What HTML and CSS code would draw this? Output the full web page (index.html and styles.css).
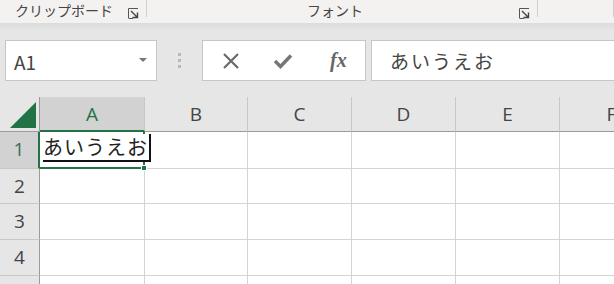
FILE: index.html
```html
<!DOCTYPE html>
<html lang="ja">

<head>
  <meta charset="UTF-8">
  <title>Excel 入力中</title>
  <link rel="stylesheet" href="styles.css">
</head>

<body>
  <!-- リボン下端のグループ名 -->
  <div class="ribbon">
    <div class="group group-clip">
      <span class="group-name">クリップボード</span>
      <svg class="launcher" width="11" height="11" viewBox="0 0 11 11">
        <path d="M0.5 10 V0.5 H10" fill="none" stroke="#555" stroke-width="1"/>
        <path d="M0.5 10.5 H5" fill="none" stroke="#555" stroke-width="1"/>
        <path d="M3 3 L9.5 9.5 M9.5 4.5 V9.5 H4.5" fill="none" stroke="#444" stroke-width="1.4"/>
      </svg>
    </div>
    <div class="group group-font">
      <span class="group-name">フォント</span>
      <svg class="launcher" width="11" height="11" viewBox="0 0 11 11">
        <path d="M0.5 10 V0.5 H10" fill="none" stroke="#555" stroke-width="1"/>
        <path d="M0.5 10.5 H5" fill="none" stroke="#555" stroke-width="1"/>
        <path d="M3 3 L9.5 9.5 M9.5 4.5 V9.5 H4.5" fill="none" stroke="#444" stroke-width="1.4"/>
      </svg>
    </div>
    <div class="group"></div>
  </div>

  <!-- 名前ボックスと数式バー -->
  <div class="formula-row">
    <div class="name-box">
      <span class="name-text">A1</span>
      <span class="drop"></span>
    </div>
    <div class="grip">
      <span></span><span></span><span></span>
    </div>
    <div class="buttons">
      <svg width="18" height="18" viewBox="0 0 18 18">
        <path d="M2 2 L16 16 M16 2 L2 16" stroke="#6a6a6a" stroke-width="2.2"/>
      </svg>
      <svg width="20" height="18" viewBox="0 0 20 18">
        <path d="M2 9 L7.5 14.5 L18 3.5" fill="none" stroke="#767676" stroke-width="3.4"/>
      </svg>
      <span class="fx">fx</span>
    </div>
    <div class="formula-input">あいうえお</div>
  </div>

  <!-- シート -->
  <div class="sheet">
    <div class="corner">
      <svg width="28" height="28" viewBox="0 0 28 28">
        <path d="M27 1 V27 H1 Z" fill="#217346"/>
      </svg>
    </div>
    <div class="col-head col-on">A</div>
    <div class="col-head">B</div>
    <div class="col-head">C</div>
    <div class="col-head">D</div>
    <div class="col-head">E</div>
    <div class="col-head">F</div>

    <div class="row-head row-on">1</div>
    <div class="cell cell-active">
      <span class="typing">あいうえお</span>
      <span class="fill-handle"></span>
    </div>
    <div class="cell"></div>
    <div class="cell"></div>
    <div class="cell"></div>
    <div class="cell"></div>
    <div class="cell"></div>

    <div class="row-head">2</div>
    <div class="cell"></div>
    <div class="cell"></div>
    <div class="cell"></div>
    <div class="cell"></div>
    <div class="cell"></div>
    <div class="cell"></div>

    <div class="row-head">3</div>
    <div class="cell"></div>
    <div class="cell"></div>
    <div class="cell"></div>
    <div class="cell"></div>
    <div class="cell"></div>
    <div class="cell"></div>

    <div class="row-head">4</div>
    <div class="cell"></div>
    <div class="cell"></div>
    <div class="cell"></div>
    <div class="cell"></div>
    <div class="cell"></div>
    <div class="cell"></div>

    <!-- 画面下端で切れている行 -->
    <div class="row-head row-cut"></div>
    <div class="cell"></div>
    <div class="cell"></div>
    <div class="cell"></div>
    <div class="cell"></div>
    <div class="cell"></div>
    <div class="cell"></div>
  </div>
</body>

</html>
```

FILE: styles.css
```css
* {
  margin: 0;
  padding: 0;
  box-sizing: border-box;
}
body {
  width: 614px;
  height: 284px;
  overflow: hidden;
  background: #fff;
  font-family: "Noto Sans CJK JP", "Noto Sans", sans-serif;
  color: #444;
}

/* リボン */
.ribbon {
  display: flex;
  height: 23px;
  background: #f3f2f1;
}
.group {
  display: flex;
  align-items: flex-start;
  height: 17px;
  border-right: 1px solid #d2d0ce;
  flex: 1;
}
.group-clip {
  flex: 0 0 147px;
  padding-left: 15px;
}
.group-font {
  flex: 0 0 391px;
  padding-left: 160px;
}
.group-name {
  font-size: 14px;
  line-height: 17px;
  margin-top: 2px;
  color: #444;
}
.launcher {
  margin-left: auto;
  margin-right: 7px;
  margin-top: 8px;
}

/* 数式バー */
.formula-row {
  display: flex;
  height: 74px;
  padding: 17px 0 0 5px;
  background: linear-gradient(#dcdcdc, #e6e6e6 8px);
}
.name-box {
  display: flex;
  align-items: center;
  width: 152px;
  height: 41px;
  background: #fff;
  border: 1px solid #c6c6c6;
  padding: 0 9px 0 8px;
}
.name-text {
  font-size: 19px;
  color: #444;
  flex: 1;
  margin-top: 2px;
}
.drop {
  width: 0;
  height: 0;
  border-left: 4px solid transparent;
  border-right: 4px solid transparent;
  border-top: 4px solid #777;
  margin-top: -2px;
}
.grip {
  width: 45px;
  height: 41px;
  display: flex;
  flex-direction: column;
  align-items: center;
  justify-content: center;
  gap: 3px;
}
.grip span {
  width: 3px;
  height: 3px;
  background: #b9b9b9;
}
.buttons {
  display: flex;
  align-items: center;
  width: 164px;
  height: 41px;
  background: #fff;
  border: 1px solid #c6c6c6;
  padding-left: 19px;
  gap: 33px;
}
.fx {
  font-family: "Liberation Serif", serif;
  font-style: italic;
  font-weight: bold;
  font-size: 20px;
  color: #666;
  margin-left: 4px;
}
.formula-input {
  flex: 1;
  height: 41px;
  margin-left: 5px;
  background: #fff;
  border: 1px solid #c6c6c6;
  border-right: 0;
  padding-left: 18px;
  font-size: 19px;
  line-height: 40px;
  letter-spacing: 2px;
  color: #444;
}

/* シート（F列は右端で切れる） */
.sheet {
  display: grid;
  grid-template-columns: 40px 105px 103px 104px 104px 104px 104px;
  grid-template-rows: 35px 37px 35px 36px 36px 8px;
  width: 614px;
  overflow: hidden;
}
.corner {
  background: #e6e6e6;
  border-right: 1px solid #9b9b9b;
  border-bottom: 1px solid #9b9b9b;
  display: flex;
  align-items: flex-end;
  justify-content: flex-end;
  padding: 0 2px 2px 0;
}
.col-head {
  background: #e6e6e6;
  border-right: 1px solid #c8c8c8;
  border-bottom: 1px solid #9b9b9b;
  text-align: center;
  font-family: "Open Sans", sans-serif;
  font-size: 19px;
  line-height: 34px;
  color: #444;
}
.col-on {
  background: #d2d2d2;
  color: #217346;
  border-bottom: 2px solid #217346;
}
.row-head {
  background: #e6e6e6;
  border-right: 1px solid #9b9b9b;
  border-bottom: 1px solid #c8c8c8;
  text-align: center;
  font-family: "Open Sans", sans-serif;
  font-size: 19px;
  line-height: 35px;
  color: #444;
}
.row-on {
  background: #d2d2d2;
  color: #3f6b52;
  border-right: 2px solid #217346;
}
.cell {
  border-right: 1px solid #d4d4d4;
  border-bottom: 1px solid #d4d4d4;
}
.row-cut,
.sheet .cell:nth-last-child(-n+6) {
  border-bottom: 0;
}
.cell-active {
  position: relative;
  border: 2px solid #217346;
  border-top: 0;
  border-left: 0;
}
.typing {
  position: absolute;
  left: 3px;
  top: 2px;
  white-space: nowrap;
  font-size: 20px;
  line-height: 26px;
  letter-spacing: 1px;
  color: #222;
  border-bottom: 2px solid #111;
  border-right: 2px solid #111;
  padding-right: 1px;
  z-index: 2;
  background: #fff;
}
.fill-handle {
  position: absolute;
  right: -4px;
  bottom: -4px;
  width: 6px;
  height: 6px;
  background: #217346;
  border: 1px solid #fff;
}
```
